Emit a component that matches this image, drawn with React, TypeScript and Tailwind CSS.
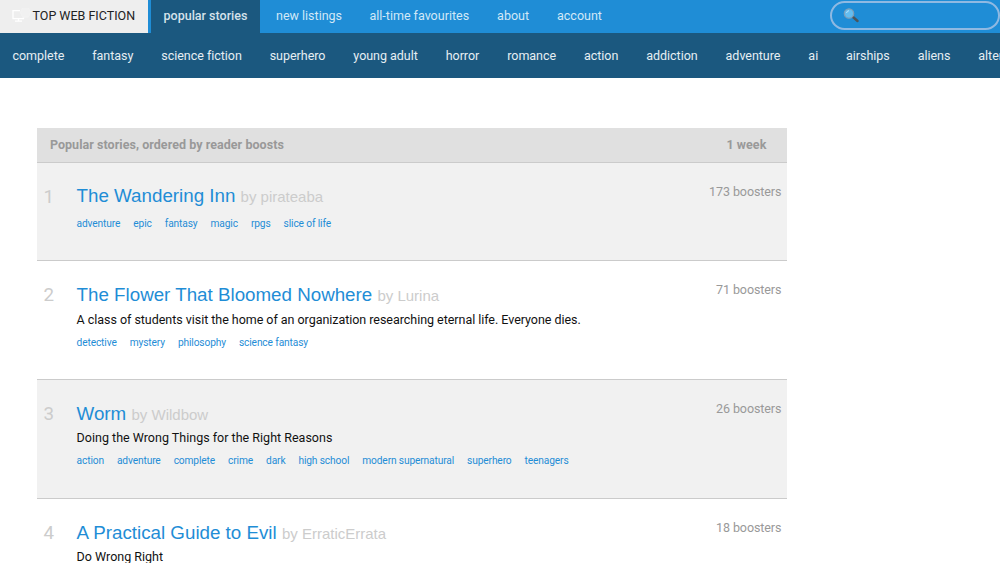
const categories = ['complete', 'fantasy', 'science fiction', 'superhero', 'young adult', 'horror', 'romance', 'action', 'addiction', 'adventure', 'ai', 'airships', 'aliens', 'alternate history'];

interface Story { title: string; author: string; boosts: number; blurb?: string; tags: string[] }

const stories: Story[] = [
  { title: 'The Wandering Inn', author: 'pirateaba', boosts: 173, tags: ['adventure', 'epic', 'fantasy', 'magic', 'rpgs', 'slice of life'] },
  { title: 'The Flower That Bloomed Nowhere', author: 'Lurina', boosts: 71, blurb: 'A class of students visit the home of an organization researching eternal life. Everyone dies.', tags: ['detective', 'mystery', 'philosophy', 'science fantasy'] },
  { title: 'Worm', author: 'Wildbow', boosts: 26, blurb: 'Doing the Wrong Things for the Right Reasons', tags: ['action', 'adventure', 'complete', 'crime', 'dark', 'high school', 'modern supernatural', 'superhero', 'teenagers'] },
  { title: 'A Practical Guide to Evil', author: 'ErraticErrata', boosts: 18, blurb: 'Do Wrong Right', tags: ['adventure', 'complete', 'fantasy'] },
];

function SiteIcon() {
  return (
    <svg className="h-[18px] w-[19px] shrink-0" viewBox="0 0 19 18" fill="none" stroke="#fff" strokeWidth="1.3">
      <path d="M8 2.700H1v8h10.500V9M6.500 10.700v2.500M3 13.200h7" />
      <path d="M11 -.5h5l2.500 5-2.500 4.500h-5L8.500 4.500z" fill="#f1f1f1" stroke="#f2f2f2" />
    </svg>
  );
}

function SearchIcon() {
  return (
    <svg className="h-[15px] w-[16px]" viewBox="0 0 16 15">
      <path d="M10 9l4.500 4" stroke="#4c555c" strokeWidth="2.400" strokeLinecap="round" />
      <circle cx="6" cy="5.500" r="4.700" fill="#64bdf0" stroke="#7d9fba" strokeWidth="1.200" />
      <path d="M3.500 5a2.800 2.800 0 0 1 2.500-2.300" stroke="#bde5fb" strokeWidth="1" fill="none" />
    </svg>
  );
}

export default function App() {
  return (
    <div className="h-[563px] w-full overflow-hidden bg-white font-['Roboto',sans-serif] text-[12.5px] leading-[18.75px] text-[#111]">
      <header className="flex h-[33px] bg-[#1f8dd6]">
        <a className="flex w-[148px] items-center bg-[#eee] pl-[11.500px] text-[#222]">
          <SiteIcon />
          <span className="ml-[2px] whitespace-nowrap">TOP WEB FICTION</span>
        </a>
        <nav className="ml-[3px] flex items-center whitespace-nowrap text-[#d2e8f7]">
          <a className="flex h-full w-[109px] items-center justify-center bg-[#1b587f] font-medium text-[#d5e2eb]">popular stories</a>
          <a className="ml-[16px]">new listings</a>
          <a className="ml-[27.400px]">all-time favourites</a>
          <a className="ml-[28px]">about</a>
          <a className="ml-[28px]">account</a>
        </nav>
        <div className="mt-[1px] ml-auto flex h-[29px] w-[170px] rounded-full border-2 border-[#8fb9e2] pt-[5px] pl-[11px]"><SearchIcon /></div>
      </header>
      <nav className="flex h-[45px] items-center gap-[27.950px] overflow-hidden bg-[#1b587f] pt-[2px] pl-[12.500px] tracking-[-0.03px] whitespace-nowrap text-[#e6eef3]">
        {categories.map((c) => <a key={c}>{c}</a>)}
      </nav>
      <main className="mt-[50px] ml-[37.400px] w-[750px]">
        <div className="flex h-[35px] items-center justify-between border-b border-[#cbcbcb] bg-[#e0e0e0] pr-[21px] pl-[12.500px] font-bold tracking-[0.045px] text-[#999]">
          <span>Popular stories, ordered by reader boosts</span>
          <span>1 week</span>
        </div>
        {stories.map((s, i) => (
          <article key={s.title} className={`flex border-b border-[#cbcbcb] ${i % 2 === 0 ? 'bg-[#f1f1f1]' : 'bg-white'} ${s.blurb ? 'h-[118.875px]' : 'h-[98px]'}`}>
            <div className="w-[39.200px] shrink-0 pt-[21.800px] pl-[6px] text-[18.750px] leading-[24px] text-[#ccc]">{i + 1}</div>
            <div className={`min-w-0 flex-1 ${s.blurb ? 'pt-[20.800px]' : 'pt-[20.400px]'}`}>
              <h2 className="font-['Liberation_Sans',sans-serif] text-[18.750px] leading-[25px] text-[#1f8dd6]">
                {s.title} <span className="text-[15px] text-[#ccc]">by {s.author}</span>
              </h2>
              {s.blurb && <p className={`mt-[1.750px] leading-[19px] ${i === 1 ? 'tracking-[-0.037px]' : 'tracking-[0.01px]'}`}>{s.blurb}</p>}
              <div className={`flex gap-[13.050px] text-[10.200px] leading-[19px] tracking-[-0.135px] text-[#1f8dd6] ${s.blurb ? 'mt-[4px]' : 'mt-[4.500px]'}`}>
                {s.tags.map((t) => <a key={t}>{t}</a>)}
              </div>
            </div>
            <div className="pt-[19.900px] pr-[6px] tracking-[-0.08px] text-[#999]">{s.boosts} boosters</div>
          </article>
        ))}
      </main>
    </div>
  );
}
